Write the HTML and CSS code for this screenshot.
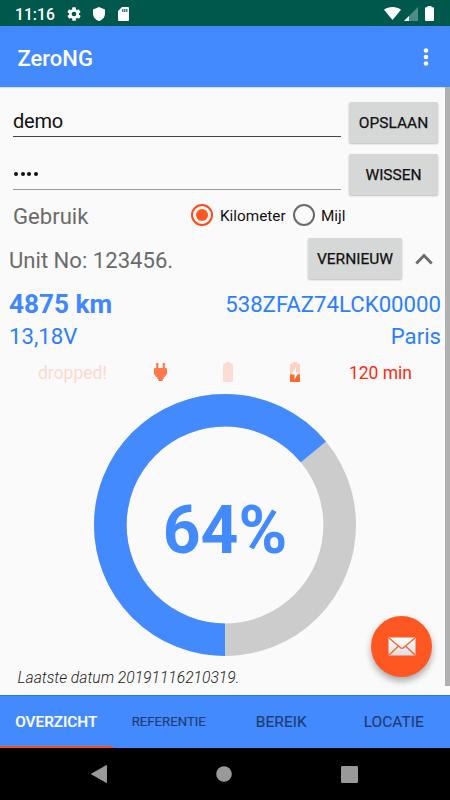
FILE: index.html
```html
<!DOCTYPE html>
<html lang="nl">
<head>
<meta charset="utf-8">
<title>ZeroNG</title>
<link rel="stylesheet" href="styles.css">
</head>
<body>
<header class="status">
  <span class="clock">11:16</span>
  <svg class="gear" width="16" height="16" viewBox="0 0 24 24"><path fill="#fff" d="M19.4 13c0-.3.1-.6.1-1s0-.7-.1-1l2.1-1.600c.2-.2.2-.4.1-.6l-2-3.500c-.1-.2-.4-.3-.6-.2l-2.500 1a7 7 0 0 0-1.700-1L14.500 2.400c0-.2-.3-.4-.5-.4h-4c-.2 0-.5.200-.5.400L9.100 5.100a7 7 0 0 0-1.700 1l-2.500-1c-.2-.1-.5 0-.6.200l-2 3.500c-.1.200-.1.500.1.600L4.600 11a8 8 0 0 0 0 2l-2.100 1.600c-.2.200-.2.400-.1.600l2 3.500c.1.200.4.300.6.200l2.500-1a7 7 0 0 0 1.700 1l.4 2.700c0 .2.200.4.500.4h4c.2 0 .5-.2.500-.4l.4-2.700a7 7 0 0 0 1.700-1l2.500 1c.2.100.5 0 .6-.2l2-3.500c.1-.2.100-.5-.1-.6zM12 15.500a3.500 3.500 0 1 1 0-7 3.500 3.500 0 0 1 0 7z"/></svg>
  <svg class="shield" width="12" height="14" viewBox="0 0 12 14"><path fill="#fff" d="M6 0 12 2.400V6.500C12 10 9.500 13 6 14 2.500 13 0 10 0 6.500V2.400z"/></svg>
  <svg class="card" width="11" height="14" viewBox="0 0 11 14"><path fill="#fff" d="M4 0h6a1 1 0 0 1 1 1v12a1 1 0 0 1-1 1H1a1 1 0 0 1-1-1V4z"/><path stroke="#00574b" stroke-width="1.100" d="M4.800 2v3M6.800 2v3M8.800 2v3"/></svg>
  <span class="grow"></span>
  <svg class="wifi" width="17" height="13" viewBox="0 0 17 13"><path fill="#fff" d="M8.500 13 0 2.700C4.500-.9 12.500-.9 17 2.700z"/></svg>
  <svg class="signal" width="14" height="14" viewBox="0 0 14 14"><path fill="#4f8d84" d="M14 0v14H0z"/><path fill="#fff" d="M5 9v5H0z"/></svg>
  <svg width="9" height="15" viewBox="0 0 9 15"><path fill="#fff" d="M2.500 0h4v1.300H8a1 1 0 0 1 1 1V14a1 1 0 0 1-1 1H1a1 1 0 0 1-1-1V2.300a1 1 0 0 1 1-1h1.500z"/></svg>
</header>
<header class="appbar">
  <h1>ZeroNG</h1>
  <svg width="6" height="20" viewBox="0 0 6 20" fill="#fff"><circle cx="3" cy="3.500" r="2.300"/><circle cx="3" cy="10" r="2.300"/><circle cx="3" cy="16.500" r="2.300"/></svg>
</header>
<main>
  <div class="row login">
    <div class="field user">demo</div>
    <div class="btn">OPSLAAN</div>
  </div>
  <div class="row login">
    <div class="field pass"><i></i><i></i><i></i><i></i></div>
    <div class="btn">WISSEN</div>
  </div>
  <div class="row usage">
    <span class="label">Gebruik</span>
    <span class="radio on"></span><span class="km">Kilometer</span>
    <span class="radio"></span><span class="mi">Mijl</span>
  </div>
  <div class="row unit">
    <span class="label">Unit No: 123456.</span>
    <div class="btn renew">VERNIEUW</div>
    <svg width="18" height="12" viewBox="0 0 18 12"><path fill="none" stroke="#6b6b6b" stroke-width="2.900" d="m1.300 10.500 7.700-7.900 7.700 7.900"/></svg>
  </div>
  <div class="row odo"><b>4875 km</b><span class="vin">538ZFAZ74LCK00000</span></div>
  <div class="row volt"><span class="v">13,18V</span><span class="city">Paris</span></div>
  <div class="row charge">
    <span class="dropped">dropped!</span>
    <svg width="13" height="18" viewBox="0 0 12 18" preserveAspectRatio="none"><path fill="#ff784c" d="M2 0h2v5h4V0h2v5h1.200l.8.800V11l-2.200 3H9v2H8v2H4v-2H3v-2h-.8L0 11V5.800L.8 5H2z"/></svg>
    <svg class="empty" width="10" height="20" viewBox="0 0 10 20"><path fill="#fcddd4" d="M3 0h4v1.500h2l1 1V20H0V2.500l1-1h2z"/></svg>
    <svg class="filling" width="10" height="20" viewBox="0 0 10 20"><path fill="#fdd0c3" d="M3 0h4v1.500h2l1 1V13H0V2.500l1-1h2z"/><path fill="#ff6b2c" d="M0 12.500h10V20H0z"/><path fill="#fff" d="M6 5v5.200h2.700L4.500 17.500v-5.300H1.800z"/></svg>
    <span class="time">120 min</span>
  </div>
  <div class="gauge">
    <svg width="264" height="264" viewBox="-132 -132 264 264" fill="none" stroke-width="32.600">
      <circle r="114.700" stroke="#ccc"/>
      <circle r="114.700" stroke="#448aff" pathLength="100" stroke-dasharray="64 36" transform="rotate(90)"/>
    </svg>
    <strong>64%</strong>
  </div>
  <p class="stamp">Laatste datum 20191116210319.</p>
  <span class="scroll"></span>
  <div class="fab">
    <svg width="28" height="19" viewBox="0 0 28 19"><defs><linearGradient id="paper" x2="0" y2="1"><stop stop-color="#fff"/><stop offset="1" stop-color="#ddd"/></linearGradient></defs><rect x=".5" y=".5" width="27" height="18" rx=".8" fill="url(#paper)"/><path fill="none" stroke="#f4622f" stroke-width="1.300" d="m1 1 11.300 9.600q1.700 1.400 3.400 0L27 1M1 18l9.500-9M27 18l-9.500-9"/></svg>
  </div>
</main>
<nav class="tabs">
  <span class="active"><em>OVERZICHT</em></span><span class="ref"><em>REFERENTIE</em></span><span><em>BEREIK</em></span><span><em>LOCATIE</em></span>
</nav>
<footer>
  <svg width="16" height="18" viewBox="0 0 16 18"><path fill="#999" d="M15 .2q1-.5 1 .5v16.600q0 1-1 .5L.5 9.500q-.8-.5 0-1z"/></svg>
  <svg width="16" height="16" viewBox="0 0 16 16"><circle cx="8" cy="8" r="7.800" fill="#999"/></svg>
  <svg width="17" height="17" viewBox="0 0 17 17"><rect width="17" height="17" rx="1.200" fill="#999"/></svg>
</footer>
</body>
</html>
```
FILE: styles.css
```css
* { box-sizing: border-box; }
body {
  margin: 0; width: 450px; height: 800px; overflow: hidden;
  display: flex; flex-direction: column;
  background: #fafafa; color: #111;
  font-family: Roboto, sans-serif; white-space: nowrap;
}
svg { display: block; flex: none; }
.grow { flex: 1; }

.status { height: 26px; background: #00574b; display: flex; align-items: center; padding: 1px 16px 0 15px; color: #fff; }
.clock { width: 51px; font-size: 15.700px; font-weight: 500; padding-top: 1px; }
.shield { margin-left: 11px; }
.card { margin-left: 13px; }
.signal { margin: 0 7px 0 3px; }

.appbar {
  height: 61px; background: #448aff; color: #fff; position: relative;
  display: flex; align-items: center; justify-content: space-between;
  padding: 0 21px 0 17.500px; box-shadow: 0 1px 1px #ddd;
}
h1 { margin: 3px 0 0; font-size: 22px; font-weight: 500; }
.appbar svg { margin-top: 1px; }

main { flex: 1; position: relative; padding-top: 10px; }
.row { display: flex; align-items: center; }
.login { height: 52px; padding: 0 12px 0 13px; justify-content: space-between; }
.field { width: 328px; height: 29px; margin-top: 4px; border-bottom: 1px solid #444; }
.user { font-size: 20px; line-height: 27px; margin-top: -1px; letter-spacing: -.25px; }
.pass { display: flex; gap: 2.700px; padding: 11px 0 0 1px; border-color: #999; margin-top: 0; }
.pass i { width: 4px; height: 4px; border-radius: 50%; background: #111; }
.btn {
  width: 89px; height: 41px; border-radius: 2px; background: #d6d7d7;
  display: flex; align-items: center; justify-content: center; padding-top: 1px; margin-top: -1px;
  font-size: 15.500px; font-weight: 400; -webkit-text-stroke: .25px; color: #111; box-shadow: 0 1px 2px #bbb;
}
.label { font-size: 22.100px; color: #6b6b6b; }
.usage { height: 28px; padding-left: 13px; }
.usage .label { width: 178px; padding-top: 2px; }
.radio { width: 22px; height: 22px; border: 2px solid #6b6b6b; border-radius: 50%; display: grid; place-items: center; }
.on { border-color: #ff4a1c; }
.on::after { content: ""; width: 12px; height: 12px; border-radius: 50%; background: #ff5722; }
.km { width: 73px; margin-left: 7px; font-size: 15.300px; }
.km, .mi { padding-top: 1px; }
.mi { margin-left: 6px; font-size: 15.300px; }
.unit { height: 58px; padding: 2px 17px 0 9px; }
.unit .label { padding-top: 1px; }
.renew { width: 94px; margin: -2px 13px 0 auto; }

.odo, .volt { color: #2b7fff; justify-content: space-between; padding: 0 9px; font-size: 22.200px; }
.odo { height: 34px; }
.odo b { font-size: 26.200px; color: #3f86ff; }
.volt { height: 31px; }
.volt span { margin-top: -1px; }
.charge { height: 38px; padding: 4px 38px 0; font-size: 17.500px; }
.charge svg { margin-top: -2px; }
.dropped { width: 116px; color: #fcd9cf; }
.empty { margin-left: 56px; }
.filling { margin-left: 57px; }
.time { margin-left: auto; color: #ff2a0d; }

.gauge { display: grid; place-items: center; height: 264px; margin-top: 3px; }
.gauge > * { grid-area: 1 / 1; }
.gauge strong { font-size: 66px; color: #448aff; padding-top: 10px; }
.stamp { margin: 10px 0 0 17.500px; font-size: 15.650px; line-height: 21px; font-style: italic; font-weight: 300; color: #222; }
.scroll { position: absolute; right: 0; top: 0; width: 5px; height: 599px; background: #b0b0b0; }
.fab {
  position: absolute; left: 371px; top: 529px; width: 61px; height: 61px; border-radius: 50%;
  background: #ff5722; display: grid; place-items: center; box-shadow: 0 4px 7px #0005;
}

.tabs { height: 53px; background: #448aff; display: grid; grid-template-columns: 112.500px 112.500px 112.500px 112.500px; border-top: 1px solid #2676f5; }
.tabs span { display: grid; place-items: center; padding-top: 1px; font-size: 15.500px; color: #203c70; -webkit-text-stroke: .15px; border-bottom: 2px solid transparent; }
.tabs em { font-style: normal; }
.tabs .active { color: #fff; font-weight: 500; border-color: #f4511e; font-size: 15.300px; }
.tabs .ref { font-size: 13.200px; }
footer { height: 52px; background: #000; display: flex; align-items: center; justify-content: space-between; padding: 0 92px 0 91px; }
```
